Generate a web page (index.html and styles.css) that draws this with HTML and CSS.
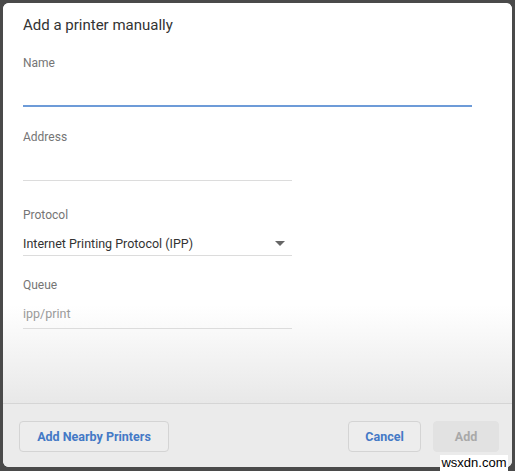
FILE: index.html
```html
<!DOCTYPE html>
<html>
<head>
<meta charset="utf-8">
<link rel="stylesheet" href="styles.css">
</head>
<body>
<div class="dialog">
  <div class="content">
    <div class="title">Add a printer manually</div>
    <div class="field f-name">
      <div class="label">Name</div>
      <div class="input wide focused"></div>
    </div>
    <div class="field f-address">
      <div class="label">Address</div>
      <div class="input"></div>
    </div>
    <div class="field f-protocol">
      <div class="label">Protocol</div>
      <div class="select">
        <span class="value">Internet Printing Protocol (IPP)</span>
        <span class="arrow"></span>
      </div>
    </div>
    <div class="field f-queue">
      <div class="label">Queue</div>
      <div class="input queue"><span class="placeholder">ipp/print</span></div>
    </div>
  </div>
  <div class="footer">
    <button class="btn nearby">Add Nearby Printers</button>
    <div class="right">
      <button class="btn cancel">Cancel</button>
      <button class="btn disabled">Add</button>
    </div>
  </div>
</div>
<div class="watermark">wsxdn.com</div>
</body>
</html>
```
FILE: styles.css
```css
html, body {
  margin: 0;
  padding: 0;
}
body {
  background: #4a4a4a;
  width: 515px;
  height: 471px;
  overflow: hidden;
  padding: 3px 0 0 3px;
  box-sizing: border-box;
  font-family: Roboto, "Noto Sans", sans-serif;
  position: relative;
}
.dialog {
  width: 509px;
  height: 464px;
  border-radius: 6px;
  overflow: hidden;
  display: flex;
  flex-direction: column;
  background: #fff;
}
.content {
  height: 400px;
  box-sizing: border-box;
  padding: 12px 20px 0 20px;
  background: linear-gradient(to bottom, #ffffff 0, #ffffff 302px, #e8e8e8 400px);
}
.title {
  font-size: 15px;
  line-height: 20px;
  color: #333;
}
.label {
  font-size: 12px;
  line-height: 16px;
  color: #757575;
}
.f-name { margin-top: 20px; }
.f-address { margin-top: 22px; }
.f-protocol { margin-top: 26px; }
.f-queue { margin-top: 21px; }
.input {
  width: 269px;
  height: 35px;
  border-bottom: 1px solid #dcdcdc;
  box-sizing: content-box;
}
.input.wide {
  width: 449px;
  height: 34px;
}
.input.focused {
  border-bottom: 2px solid #6d9bd8;
}
.input.queue {
  display: flex;
  align-items: flex-end;
  height: 35px;
}
.placeholder {
  font-size: 12.5px;
  line-height: 16px;
  color: #9a9a9a;
  padding-bottom: 6px;
}
.select {
  width: 269px;
  height: 33px;
  border-bottom: 1px solid #dcdcdc;
  display: flex;
  align-items: flex-end;
  justify-content: space-between;
  padding-bottom: 3px;
  box-sizing: border-box;
}
.select .value {
  font-size: 12.5px;
  line-height: 16px;
  color: #333;
}
.select .arrow {
  width: 0;
  height: 0;
  border-left: 5px solid transparent;
  border-right: 5px solid transparent;
  border-top: 5px solid #666;
  margin: 0 7px 6px 0;
}
.footer {
  flex: 1;
  border-top: 1px solid #d5d5d5;
  background: #ebebeb;
  display: flex;
  justify-content: space-between;
  align-items: flex-start;
  padding: 17px 13px 0 16px;
}
.right {
  display: flex;
  gap: 12px;
}
.btn {
  height: 31px;
  padding: 0 15px;
  border: 1px solid #d4d4d4;
  border-radius: 4px;
  background: #ededed;
  color: #4479c6;
  font-family: Roboto, "Noto Sans", sans-serif;
  font-weight: 700;
  font-size: 12.5px;
}
.btn.nearby {
  width: 150px;
  padding: 0;
}
.btn.cancel {
  width: 73px;
  padding: 0;
}
.btn.disabled {
  width: 66px;
  padding: 0;
  background: #e2e2e2;
  border-color: #e2e2e2;
  color: #a9a9a9;
}
.watermark {
  position: absolute;
  left: 440px;
  top: 455px;
  width: 68px;
  height: 16px;
  background: #fff;
  color: #000;
  font-family: "Liberation Sans", Arial, sans-serif;
  font-size: 13px;
  line-height: 16px;
  text-align: center;
}
```
